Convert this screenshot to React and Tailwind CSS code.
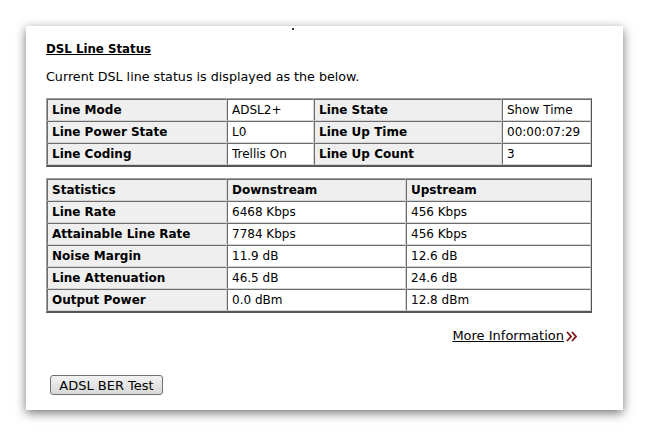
const FONT = "font-['DejaVu_Sans','Verdana',sans-serif]";

const lineRows = [
  ["Line Mode", "ADSL2+", "Line State", "Show Time"],
  ["Line Power State", "L0", "Line Up Time", "00:00:07:29"],
  ["Line Coding", "Trellis On", "Line Up Count", "3"],
];

const statRows = [
  ["Line Rate", "6468 Kbps", "456 Kbps"],
  ["Attainable Line Rate", "7784 Kbps", "456 Kbps"],
  ["Noise Margin", "11.9 dB", "12.6 dB"],
  ["Line Attenuation", "46.5 dB", "24.6 dB"],
  ["Output Power", "0.0 dBm", "12.8 dBm"],
];

const tableCls =
  "w-[546px] table-fixed border-separate border-spacing-0 border border-t-[#a0a0a0] border-l-[#a0a0a0] border-r-[#555] border-b-[#555] border-b-2";

function Cell({ children, head = false, w }) {
  return (
    <td
      className={`h-[22px] border border-t-[#6b6b6b] border-l-[#6b6b6b] border-r-[#d4d4d4] border-b-[#d4d4d4] px-[4px] py-0 align-middle whitespace-nowrap text-[12px] leading-none text-black ${
        head ? "bg-[#efefef] font-bold" : "bg-white"
      } ${w || ""}`}
    >
      {children}
    </td>
  );
}

function Chevrons() {
  return (
    <svg width="13" height="11" viewBox="0 0 13 11" className="ml-[2px] inline-block">
      <path d="M1 1 L5 5.5 L1 10" fill="none" stroke="#7d1212" strokeWidth="1.8" />
      <path d="M6 1 L10 5.5 L6 10" fill="none" stroke="#7d1212" strokeWidth="1.8" />
    </svg>
  );
}

export default function App() {
  return (
    <div className={`h-[437px] w-[649px] bg-white ${FONT}`}>
      <div className="pl-[26px] pt-[26px]">
        <div className="relative h-[384px] w-[597px] bg-white px-[20px] shadow-[0_3px_10px_rgba(0,0,0,0.55)]">
          <span className="absolute left-[266px] top-[2px] h-[2px] w-[2px] bg-[#333]" />
          <div className="pt-[15px] text-[11.8px] font-bold underline leading-[16px]">DSL Line Status</div>
          <p className="mt-[12px] text-[12.7px] leading-[16px]">
            Current DSL line status is displayed as the below.
          </p>

          <table className={`mt-[13px] ${tableCls}`}>
            <tbody>
              {lineRows.map((r) => (
                <tr key={r[0]}>
                  <Cell head w="w-[180px]">{r[0]}</Cell>
                  <Cell w="w-[87px]">{r[1]}</Cell>
                  <Cell head w="w-[188px]">{r[2]}</Cell>
                  <Cell>{r[3]}</Cell>
                </tr>
              ))}
            </tbody>
          </table>

          <table className={`mt-[11px] ${tableCls}`}>
            <tbody>
              <tr>
                <Cell head w="w-[180px]">Statistics</Cell>
                <Cell head w="w-[179px]">Downstream</Cell>
                <Cell head>Upstream</Cell>
              </tr>
              {statRows.map((r) => (
                <tr key={r[0]}>
                  <Cell head>{r[0]}</Cell>
                  <Cell>{r[1]}</Cell>
                  <Cell>{r[2]}</Cell>
                </tr>
              ))}
            </tbody>
          </table>

          <div className="mt-[15px] flex w-[546px] justify-end pr-[13px]">
            <a href="#" className="flex items-center text-[13px] leading-[16px] text-black underline">
              More Information
              <Chevrons />
            </a>
          </div>

          <button
            type="button"
            className="ml-[4px] mt-[31px] h-[20px] w-[113px] rounded-[3px] border border-[#707070] bg-gradient-to-b from-[#f2f2f2] to-[#d8d8d8] text-[13px] leading-none text-black"
          >
            ADSL BER Test
          </button>
        </div>
      </div>
    </div>
  );
}
